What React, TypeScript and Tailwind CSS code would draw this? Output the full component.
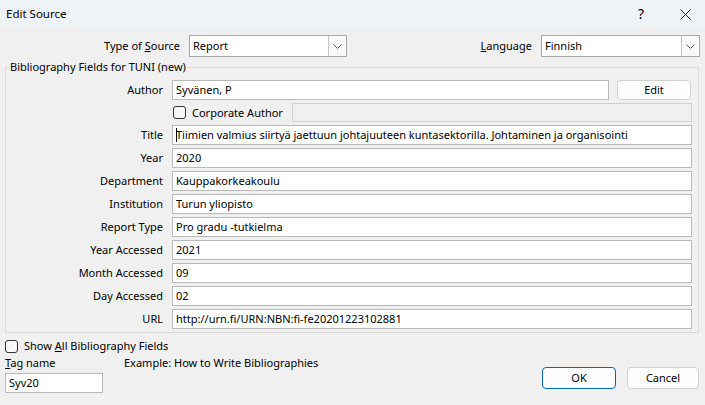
import React from 'react';

const font = "font-['Segoe_UI','Noto_Sans',sans-serif]";

const Field = ({ value, caret }: { value: string; caret?: boolean }) => (
  <div className="flex-1 h-[20px] bg-white border border-[#b9b9b9] flex items-center pl-[3px] text-black whitespace-nowrap overflow-hidden">
    {caret && <span className="inline-block w-px h-[14px] bg-black mr-[-1px]" />}
    <span>{value}</span>
  </div>
);

const Row = ({ label, value, caret }: { label: string; value: string; caret?: boolean }) => (
  <div className="flex items-center h-[20px] mt-[3px]">
    <div className="w-[157px] text-right">{label}</div>
    <div className="ml-[9px] flex w-[520px]">
      <Field value={value} caret={caret} />
    </div>
  </div>
);

const Combo = ({ value, width }: { value: string; width: string }) => (
  <div className={`${width} h-[22px] bg-white border border-[#a8a8a8] flex items-stretch`}>
    <div className="flex-1 flex items-center pl-[3px]">{value}</div>
    <div className="w-[18px] border-l border-[#c8c8c8] bg-[#f9f9f9] flex items-center justify-center">
      <svg width="9" height="5" viewBox="0 0 9 5">
        <path d="M0.5 0.5 L4.5 4.5 L8.5 0.5" fill="none" stroke="#606060" strokeWidth="1" />
      </svg>
    </div>
  </div>
);

const Check = () => (
  <span className="inline-block w-[13px] h-[13px] border border-[#333] rounded-[3px] bg-[#f7f7f7]" />
);

const rows: { label: string; value: string; caret?: boolean }[] = [
  { label: 'Year', value: '2020' },
  { label: 'Department', value: 'Kauppakorkeakoulu' },
  { label: 'Institution', value: 'Turun yliopisto' },
  { label: 'Report Type', value: 'Pro gradu -tutkielma' },
  { label: 'Year Accessed', value: '2021' },
  { label: 'Month Accessed', value: '09' },
  { label: 'Day Accessed', value: '02' },
  { label: 'URL', value: 'http://urn.fi/URN:NBN:fi-fe20201223102881' },
];

export default function App() {
  return (
    <div className={`w-[705px] h-[405px] bg-[#f0f0f0] text-[11px] leading-[16px] text-black ${font} overflow-hidden`}>
      {/* title bar */}
      <div className="h-[28px] bg-[#eef3f8] flex items-center pl-[6px]">
        <span className="text-[11.5px]">Edit Source</span>
        <span className="ml-auto text-[14px] mr-[36px]">?</span>
        <svg width="11" height="11" viewBox="0 0 11 11" className="mr-[14px]">
          <path d="M0.5 0.5 L10.5 10.5 M10.5 0.5 L0.5 10.5" stroke="#222" strokeWidth="1" />
        </svg>
      </div>

      {/* source type / language */}
      <div className="flex items-center mt-[7px]">
        <div className="w-[180px] text-right">
          Type of <span className="underline">S</span>ource
        </div>
        <div className="ml-[9px]">
          <Combo value="Report" width="w-[158px]" />
        </div>
        <div className="ml-auto">
          <span className="underline">L</span>anguage
        </div>
        <div className="ml-[9px] mr-[5px]">
          <Combo value="Finnish" width="w-[159px]" />
        </div>
      </div>

      {/* group box */}
      <fieldset className="ml-[5px] mt-[2px] w-[694px] border border-[#d9d9d9] pb-[3px] px-0">
        <legend className="ml-[3px] px-[1px]">Bibliography Fields for TUNI (new)</legend>

        <div className="flex items-center h-[20px] mt-[5px]">
          <div className="w-[157px] text-right">Author</div>
          <div className="ml-[9px] flex w-[437px]">
            <Field value="Syvänen, P" />
          </div>
          <button className="ml-[8px] w-[74px] h-[20px] bg-[#fdfdfd] border border-[#d0d0d0] rounded-[4px]">
            Edit
          </button>
        </div>

        <div className="flex items-center h-[19px] mt-[3px]">
          <div className="w-[157px]" />
          <div className="ml-[10px] flex items-center">
            <Check />
            <span className="ml-[6px]">Corporate Author</span>
          </div>
          <div className="ml-auto mr-[6px] w-[400px] h-[19px] border border-[#cfcfcf] bg-[#f0f0f0]" />
        </div>

        <div className="mt-[2px]">
          <Row label="Title" value="Tiimien valmius siirtyä jaettuun johtajuuteen kuntasektorilla. Johtaminen ja organisointi" caret />
        </div>
        {rows.map(r => (
          <Row key={r.label} label={r.label} value={r.value} />
        ))}
      </fieldset>

      {/* bottom */}
      <div className="flex pl-[5px] pr-[6px] mt-[6px]">
        <div className="flex flex-col">
          <div className="flex items-center h-[14px]">
            <Check />
            <span className="ml-[6px]">
              Show <span className="underline">A</span>ll Bibliography Fields
            </span>
          </div>
          <div className="flex mt-[2px] h-[16px] items-center">
            <span className="w-[119px]">
              <span className="underline">T</span>ag name
            </span>
            <span>Example: How to Write Bibliographies</span>
          </div>
          <div className="w-[98px] h-[20px] mt-[2px] bg-white border border-[#b9b9b9] flex items-center pl-[3px]">
            Syv20
          </div>
        </div>
        <div className="ml-auto flex items-start gap-[11px] pt-[28px]">
          <button className="w-[74px] h-[22px] bg-[#fdfdfd] border-[1.5px] border-[#0067c0] rounded-[4px]">OK</button>
          <button className="w-[72px] h-[22px] bg-[#fdfdfd] border border-[#d0d0d0] rounded-[4px]">Cancel</button>
        </div>
      </div>
    </div>
  );
}
